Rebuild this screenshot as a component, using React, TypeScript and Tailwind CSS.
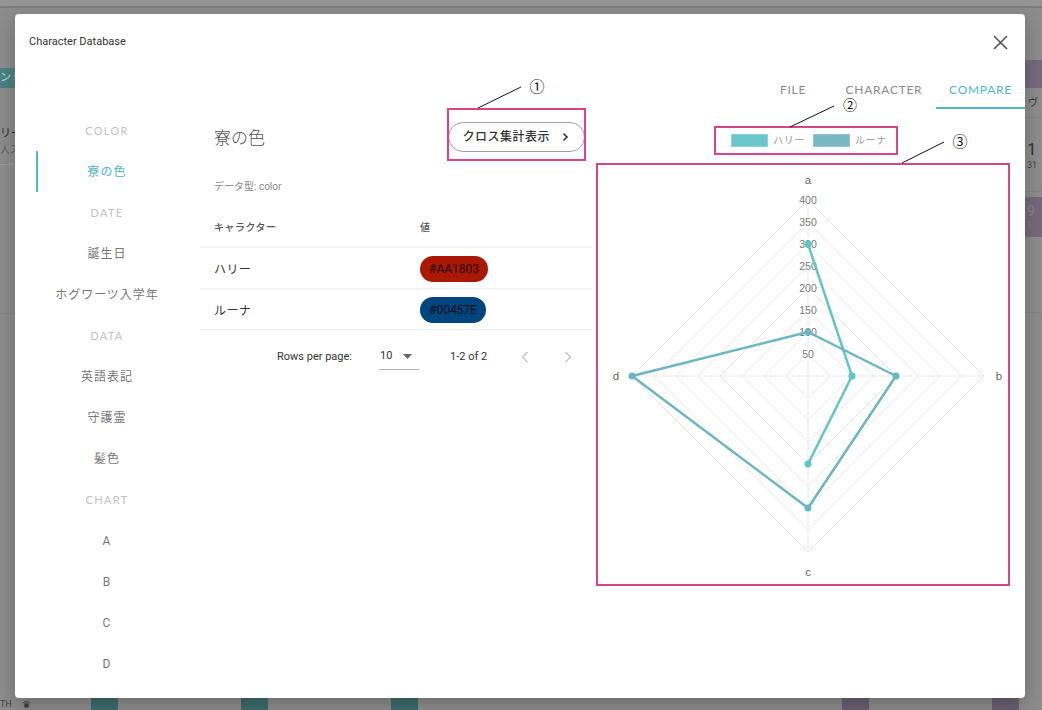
import React from "react";

// nav on the left side of the dialog
const navItems = [
  { label: "COLOR", heading: true },
  { label: "寮の色", active: true },
  { label: "DATE", heading: true },
  { label: "誕生日" },
  { label: "ホグワーツ入学年" },
  { label: "DATA", heading: true },
  { label: "英語表記" },
  { label: "守護霊" },
  { label: "髪色" },
  { label: "CHART", heading: true },
  { label: "A" },
  { label: "B" },
  { label: "C" },
  { label: "D" },
];

const rows = [
  { name: "ハリー", value: "#AA1803", chip: "bg-[#AA1803]" },
  { name: "ルーナ", value: "#00457E", chip: "bg-[#00457E]" },
];

const tabs = [
  { label: "FILE", width: "w-[78px]" },
  { label: "CHARACTER", width: "w-[104px]" },
  { label: "COMPARE", width: "w-[89px]", active: true },
];

// radar chart geometry
const CX = 210;
const CY = 211;
const STEP = 22;

function point(axis: number, value: number) {
  const r = (value / 50) * STEP;
  if (axis === 0) return [CX, CY - r];
  if (axis === 1) return [CX + r, CY];
  if (axis === 2) return [CX, CY + r];
  return [CX - r, CY];
}

const harry = [300, 100, 200].map((v, i) => point(i, v));
const luna = [100, 200, 300, 400].map((v, i) => point(i, v));

function RadarChart() {
  const rings = [1, 2, 3, 4, 5, 6, 7, 8];
  return (
    <svg width="410" height="419" className="font-['Liberation_Sans',Arial,sans-serif]">
      {rings.map((k) => {
        const r = k * STEP;
        return (
          <polygon
            key={k}
            points={`${CX},${CY - r} ${CX + r},${CY} ${CX},${CY + r} ${CX - r},${CY}`}
            fill="none"
            stroke="#e8e8e8"
            strokeWidth="1"
          />
        );
      })}
      {[0, 1, 2, 3].map((a) => {
        const [x, y] = point(a, 400);
        return <line key={a} x1={CX} y1={CY} x2={x} y2={y} stroke="#e8e8e8" strokeWidth="1" />;
      })}

      {rings.map((k) => {
        const label = String(k * 50);
        const w = label.length === 3 ? 20 : 14;
        return (
          <g key={k}>
            <rect x={CX - w / 2} y={CY - k * STEP - 6} width={w} height="12" fill="#fff" />
            <text x={CX} y={CY - k * STEP + 3.5} textAnchor="middle" fontSize="10.5" fill="#777">
              {label}
            </text>
          </g>
        );
      })}

      <text x={CX} y={19} textAnchor="middle" fontSize="11.5" fill="#666">a</text>
      <text x={401} y={215} textAnchor="middle" fontSize="11.5" fill="#666">b</text>
      <text x={CX} y={411} textAnchor="middle" fontSize="11.5" fill="#666">c</text>
      <text x={18} y={215} textAnchor="middle" fontSize="11.5" fill="#666">d</text>

      <polyline
        points={harry.map((p) => p.join(",")).join(" ")}
        fill="none"
        stroke="#60c4c8"
        strokeWidth="2.5"
        strokeLinejoin="round"
      />
      {harry.map(([x, y], i) => (
        <circle key={i} cx={x} cy={y} r="3.5" fill="#60c4c8" />
      ))}

      <polygon
        points={luna.map((p) => p.join(",")).join(" ")}
        fill="none"
        stroke="#6cb6c3"
        strokeWidth="2.5"
        strokeLinejoin="round"
      />
      {luna.map(([x, y], i) => (
        <circle key={i} cx={x} cy={y} r="3.5" fill="#6cb6c3" />
      ))}
    </svg>
  );
}

function Chevron({ dir, className }: { dir: "left" | "right"; className?: string }) {
  return (
    <svg width="8" height="12" viewBox="0 0 8 12" className={className}>
      <polyline
        points={dir === "left" ? "6.5,1 1.5,6 6.5,11" : "1.5,1 6.5,6 1.5,11"}
        fill="none"
        stroke="currentColor"
        strokeWidth="1.3"
      />
    </svg>
  );
}

function BackgroundPage() {
  // what shows of the page behind the dialog, dimmed by the backdrop
  return (
    <div className="flex h-full flex-col">
      <div className="h-[8px] shrink-0 border-b-2 border-[#7c7c7c] bg-[#949494]" />
      <div className="flex flex-1 justify-between">
        <div className="flex w-[40px] flex-col">
          <div className="mt-[60px] flex h-[20px] items-center overflow-hidden whitespace-nowrap bg-[#4b8383] text-[11px] text-[#c9dcdc]">
            <span>ント</span>
          </div>
          <div className="mt-[38px] whitespace-nowrap text-[11px] leading-[16px] text-[#2c2c2c]">リー</div>
          <div className="whitespace-nowrap text-[10px] leading-[16px] text-[#5e5e5e]">人ス</div>
          <div className="mt-[6px] border-b border-[#9c9c9c]" />
          <div className="mt-[148px] border-b border-[#858585]" />
        </div>
        <div className="flex w-[42px] flex-col">
          <div className="mt-[52px] h-[28px] bg-[#77697e]" />
          <div className="flex h-[30px] items-center border-b border-[#858585] pl-[28px] text-[10px] text-[#3a3a3a]">
            ヴ
          </div>
          <div className="flex h-[74px] flex-col justify-center border-b border-[#858585] pl-[27px]">
            <span className="text-[17px] leading-[20px] text-[#353535]">1</span>
            <span className="text-[9px] leading-[12px] text-[#444]">31</span>
          </div>
          <div className="mt-[5px] flex h-[40px] flex-col justify-center bg-[#76697c] pl-[27px]">
            <span className="text-[14px] leading-[16px] text-[#8a7f90]">9</span>
            <span className="text-[9px] leading-[12px] text-[#8a7f90]">1</span>
          </div>
          <div className="mt-[75px] border-b border-[#858585]" />
        </div>
      </div>
      <div className="flex h-[12px] shrink-0 items-end">
        <span className="w-[10px] text-[9px] leading-[12px] text-[#444]">TH</span>
        <span className="ml-[12px] text-[10px] leading-[10px] text-[#333]">♛</span>
        <div className="ml-[60px] h-full w-[27px] bg-[#3e6d6d]" />
        <div className="ml-[123px] h-full w-[27px] bg-[#3e6d6d]" />
        <div className="ml-[123px] h-full w-[27px] bg-[#3e6d6d]" />
        <div className="ml-[424px] h-full w-[27px] bg-[#6c6072]" />
        <div className="ml-[123px] h-full w-[27px] bg-[#6c6072]" />
      </div>
    </div>
  );
}

export default function App() {
  return (
    <div className="relative h-[710px] w-[1042px] overflow-hidden bg-[#8d8d8d] font-['Roboto','Noto_Sans_CJK_JP',sans-serif]">
      <BackgroundPage />

      {/* dialog */}
      <div className="absolute left-[15px] top-[14px] flex h-[684px] w-[1010px] flex-col rounded-[4px] bg-white shadow-[0_6px_20px_rgba(0,0,0,0.25)]">
        <div className="flex h-[56px] shrink-0 items-center justify-between pl-[14px] pr-[17px]">
          <span className="text-[11px] text-[#333]">Character Database</span>
          <svg width="15" height="15" viewBox="0 0 15 15">
            <path d="M1 1 L14 14 M14 1 L1 14" stroke="#555" strokeWidth="1.6" />
          </svg>
        </div>

        <div className="flex h-[39px] shrink-0 justify-end font-['Lato','Noto_Sans_CJK_JP',sans-serif]">
          {tabs.map((t) => (
            <div
              key={t.label}
              className={
                t.active
                  ? `flex ${t.width} items-center justify-center border-b-2 border-[#4fb8c4] pt-[2px] text-[12px] leading-none tracking-[0.06em] text-[#4fb8c4]`
                  : `flex ${t.width} items-center justify-center text-[12px] leading-none tracking-[0.06em] text-[#8a8a8a]`
              }
            >
              {t.label}
            </div>
          ))}
        </div>

        <div className="flex min-h-0 flex-1">
          {/* left nav */}
          <div className="w-[185px] shrink-0 pl-[21px] pt-[1px]">
            <div className="w-[142px]">
              {navItems.map((item) =>
                item.heading ? (
                  <div
                    key={item.label}
                    className="flex h-[41px] items-center justify-center pt-[1px] font-['Lato',sans-serif] text-[11px] tracking-[0.12em] text-[#c2c2c2]"
                  >
                    {item.label}
                  </div>
                ) : item.active ? (
                  <div
                    key={item.label}
                    className="flex h-[41px] items-center justify-center border-l-2 border-[#4fb8c4] pr-[2px] text-[12px] tracking-[0.1em] text-[#4fb8c4]"
                  >
                    {item.label}
                  </div>
                ) : (
                  <div
                    key={item.label}
                    className="flex h-[41px] items-center justify-center text-[12px] tracking-[0.08em] text-[#777]"
                  >
                    {item.label}
                  </div>
                )
              )}
            </div>
          </div>

          {/* detail table */}
          <div className="w-[392px] shrink-0 pt-[13px]">
            <div className="flex h-[30px] items-center justify-between pl-[14px] pr-[7px]">
              <span className="mt-[3px] text-[17px] font-light text-[#555]">寮の色</span>
              <div className="relative">
                <button className="flex h-[30px] items-center gap-[12px] rounded-full border border-[#a0a0a0] pl-[14px] pr-[15px] text-[12px] font-medium tracking-[0.04em] text-[#333]">
                  クロス集計表示
                  <svg width="7" height="10" viewBox="0 0 7 10">
                    <polyline points="1.5,1.5 5,5 1.5,8.5" fill="none" stroke="#333" strokeWidth="1.6" />
                  </svg>
                </button>
                <div className="pointer-events-none absolute -bottom-[9px] -left-[1px] -right-[1px] -top-[14px] border-2 border-[#d5458e]" />
              </div>
            </div>

            <div className="mt-[28px] pl-[14px] text-[10px] leading-[14px] text-[#888]">データ型: color</div>

            <div className="mt-[14px] flex h-[40px] items-center border-b border-[#eeeeee] pl-[14px] text-[10px] font-medium tracking-[0.05em] text-[#555]">
              <span className="w-[206px]">キャラクター</span>
              <span>値</span>
            </div>
            {rows.map((r) => (
              <div key={r.name} className="flex h-[41px] items-center border-b border-[#eeeeee] pl-[14px]">
                <span className="mt-[3px] w-[206px] text-[12px] tracking-[0.04em] text-[#333]">{r.name}</span>
                <span
                  className={`mt-[2px] flex h-[26px] items-center rounded-full px-[9px] text-[12px] text-black/85 ${r.chip}`}
                >
                  {r.value}
                </span>
              </div>
            ))}

            <div className="flex h-[54px] items-center pl-[77px] text-[11px] text-[#333]">
              <span>Rows per page:</span>
              <div className="ml-[27px] flex h-[25px] w-[40px] items-center justify-between border-b border-[#b5b5b5] pl-[1px] pr-[7px]">
                <span>10</span>
                <svg width="9" height="5" viewBox="0 0 9 5">
                  <polygon points="0,0 9,0 4.5,5" fill="#666" />
                </svg>
              </div>
              <span className="ml-[31px]">1-2 of 2</span>
              <div className="ml-[26px] flex w-[24px] justify-center text-[#c4c4c4]">
                <Chevron dir="left" />
              </div>
              <div className="ml-[19px] flex w-[24px] justify-center text-[#c4c4c4]">
                <Chevron dir="right" />
              </div>
            </div>
          </div>

          {/* compare chart */}
          <div className="flex-1 pl-[4px]">
            <div className="ml-[118px] mt-[17px] flex h-[29px] w-[184px] items-center justify-center gap-[5px] border-2 border-[#d5458e] pl-[6px] text-[10px] tracking-[0.06em] text-[#999]">
              <span className="h-[13px] w-[37px] border border-[#8fd4d7] bg-[#6bc7cb]" />
              <span>ハリー</span>
              <span className="ml-[3px] h-[13px] w-[37px] border border-[#92c7d0] bg-[#78b8c4]" />
              <span>ルーナ</span>
            </div>
            <div className="mt-[8px] h-[423px] w-[414px] border-2 border-[#d5458e]">
              <RadarChart />
            </div>
          </div>
        </div>
      </div>

      {/* annotation callouts */}
      <svg className="pointer-events-none absolute inset-0" width="1042" height="710">
        <line x1="478" y1="108" x2="521" y2="87" stroke="#111" strokeWidth="1" />
        <line x1="790" y1="127" x2="834" y2="106" stroke="#111" strokeWidth="1" />
        <line x1="902" y1="163" x2="944" y2="142" stroke="#111" strokeWidth="1" />
      </svg>
      <span className="absolute left-[537px] top-[85px] -translate-x-1/2 -translate-y-1/2 font-['Noto_Sans_CJK_JP',sans-serif] text-[15px] leading-none text-[#111]">
        ①
      </span>
      <span className="absolute left-[850px] top-[104px] -translate-x-1/2 -translate-y-1/2 font-['Noto_Sans_CJK_JP',sans-serif] text-[14px] leading-none text-[#111]">
        ②
      </span>
      <span className="absolute left-[960px] top-[140px] -translate-x-1/2 -translate-y-1/2 font-['Noto_Sans_CJK_JP',sans-serif] text-[15px] leading-none text-[#111]">
        ③
      </span>
    </div>
  );
}
